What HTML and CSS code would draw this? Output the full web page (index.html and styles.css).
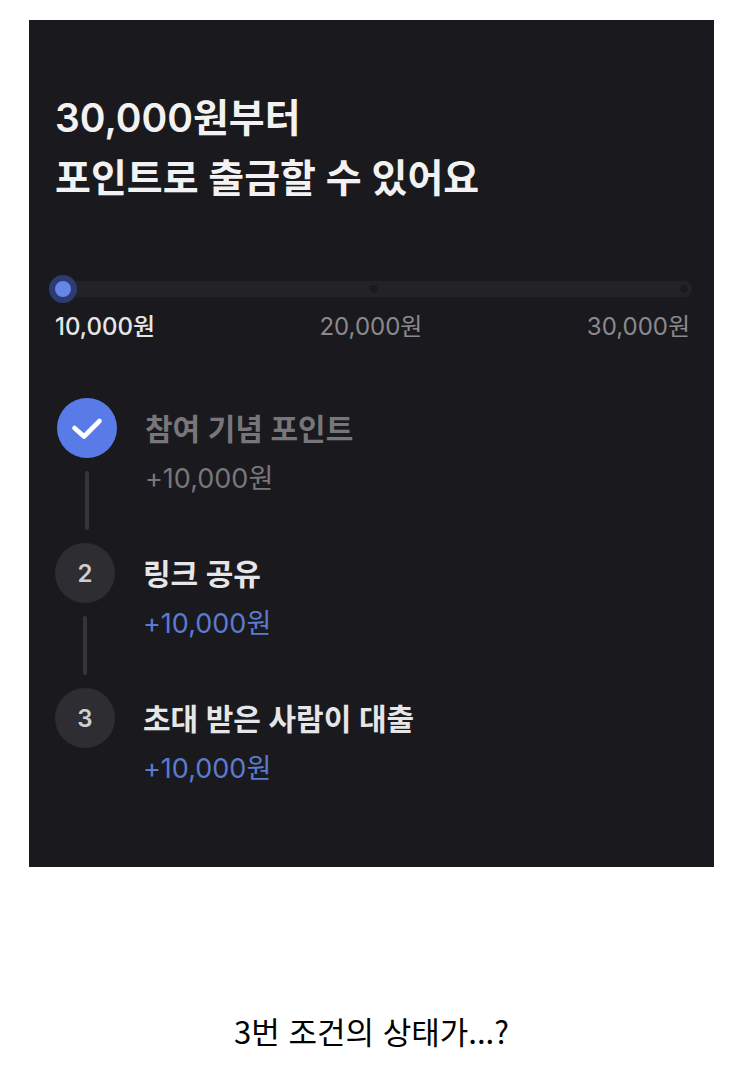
FILE: index.html
```html
<!DOCTYPE html>
<html lang="ko">
<head>
  <meta charset="utf-8">
  <meta name="viewport" content="width=device-width, initial-scale=1">
  <title>포인트 출금</title>
  <link rel="stylesheet" href="styles.css">
</head>
<body>
  <main class="card">
    <h1>30,000원부터<br>포인트로 출금할 수 있어요</h1>

    <div class="progress">
      <div class="track">
        <span class="handle"></span>
        <span class="tick"></span>
        <span class="tick"></span>
      </div>
      <div class="amounts">
        <span class="current">10,000원</span>
        <span>20,000원</span>
        <span>30,000원</span>
      </div>
    </div>

    <ol class="steps">
      <li class="step done">
        <div class="marker">
          <span class="badge">
            <svg width="32" height="24" viewBox="0 0 32 24" fill="none" stroke="#fff" stroke-width="4.6" stroke-linecap="round" stroke-linejoin="round">
              <path d="M3.5 12 L13 20.5 L28.5 5"/>
            </svg>
          </span>
        </div>
        <div class="info">
          <h2>참여 기념 포인트</h2>
          <p>+10,000원</p>
        </div>
      </li>
      <li class="step">
        <div class="marker"><span class="badge">2</span></div>
        <div class="info">
          <h2>링크 공유</h2>
          <p>+10,000원</p>
        </div>
      </li>
      <li class="step">
        <div class="marker"><span class="badge">3</span></div>
        <div class="info">
          <h2>초대 받은 사람이 대출</h2>
          <p>+10,000원</p>
        </div>
      </li>
    </ol>
  </main>

  <p class="caption">3번 조건의 상태가...?</p>
</body>
</html>
```
FILE: styles.css
```css
* {
  box-sizing: border-box;
}

body {
  margin: 0;
  padding: 20px 29px;
  background: #fff;
  font-family: Inter, "Noto Sans CJK KR", sans-serif;
}

h1,
h2,
p,
ol {
  margin: 0;
  padding: 0;
}

.card {
  padding: 68px 24px 80px 26px;
  background: #1a1a1e;
  color: #f2f2f3;
}

h1 {
  font-size: 39px;
  font-weight: 600;
  line-height: 60px;
}

.progress {
  margin-top: 73px;
}

.track {
  display: flex;
  justify-content: space-between;
  align-items: center;
  height: 16px;
  margin: 0 -2px 0 -6px;
  padding-right: 4px;
  border-radius: 8px;
  background: #222327;
}

.handle {
  width: 28px;
  height: 28px;
  margin-right: -10px;
  border: 6px solid #2c3c72;
  border-radius: 50%;
  background: #6685e8;
}

.tick {
  width: 8px;
  height: 8px;
  border-radius: 50%;
  background: #1b1b1f;
}

.amounts {
  display: flex;
  justify-content: space-between;
  margin-top: 14px;
  font-size: 24px;
  line-height: 32px;
  color: #8a8a8e;
}

.amounts .current {
  color: #e6e6e8;
  font-weight: 500;
}

.steps {
  margin-top: 55px;
  list-style: none;
}

.step {
  display: flex;
  gap: 28px;
}

.step.done {
  padding-left: 2px;
}

.marker {
  display: flex;
  flex-direction: column;
  align-items: center;
  gap: 13px;
}

.badge {
  display: flex;
  align-items: center;
  justify-content: center;
  width: 60px;
  height: 60px;
  border-radius: 50%;
  background: #2d2d32;
  color: #cfcfd2;
  font-size: 24px;
  font-weight: 600;
}

/* line down to the next step */
.step:not(:last-child) .marker::after {
  content: '';
  width: 4px;
  height: 59px;
  margin-bottom: 13px;
  border-radius: 2px;
  background: #36363a;
}

.info {
  padding-top: 9px;
}

.info h2 {
  font-size: 30px;
  font-weight: 600;
  line-height: 44px;
  color: #e6e6e8;
}

.info p {
  margin-top: 10px;
  font-size: 27px;
  line-height: 36px;
  color: #5b7bd0;
}

.done .badge {
  background: #587be8;
}

.done h2,
.done p {
  color: #77777b;
}

.caption {
  margin-top: 140px;
  font-family: "Noto Sans CJK KR", sans-serif;
  font-size: 31px;
  line-height: 48px;
  text-align: center;
  color: #000;
}
```
